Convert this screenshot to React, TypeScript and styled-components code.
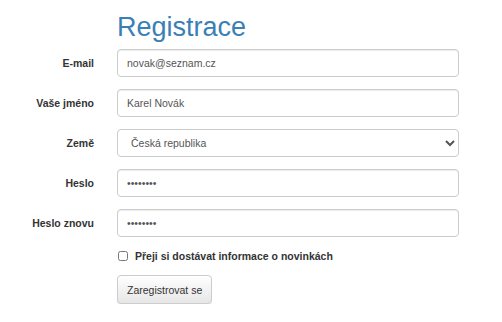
import React, { useState } from "react";
import styled, { createGlobalStyle } from "styled-components";

const GlobalStyle = createGlobalStyle`
  html, body {
    margin: 0;
    padding: 0;
    background: #fff;
  }
  body {
    font-family: "Liberation Sans", Arial, sans-serif;
    font-size: 10.5px;
    color: #333;
  }
`;

const RegistrationPage: React.FC = () => {
  const [email, setEmail] = useState("novak@seznam.cz");
  const [name, setName] = useState("Karel Novák");
  const [country, setCountry] = useState("cz");
  const [password, setPassword] = useState("tajneheslo".slice(0, 8));
  const [password2, setPassword2] = useState("tajneheslo".slice(0, 8));
  const [news, setNews] = useState(false);

  return (
    <>
      <GlobalStyle />
      <Form onSubmit={(e) => e.preventDefault()}>
        <Spacer />
        <Title>Registrace</Title>

        <Label htmlFor="email">E-mail</Label>
        <Input
          id="email"
          type="text"
          value={email}
          onChange={(e) => setEmail(e.target.value)}
        />

        <Label htmlFor="name">Vaše jméno</Label>
        <Input
          id="name"
          type="text"
          value={name}
          onChange={(e) => setName(e.target.value)}
        />

        <Label htmlFor="country">Země</Label>
        <Select
          id="country"
          value={country}
          onChange={(e) => setCountry(e.target.value)}
        >
          <option value="cz">Česká republika</option>
          <option value="sk">Slovenská republika</option>
        </Select>

        <Label htmlFor="pass">Heslo</Label>
        <Input
          id="pass"
          type="password"
          value={password}
          onChange={(e) => setPassword(e.target.value)}
        />

        <Label htmlFor="pass2">Heslo znovu</Label>
        <Input
          id="pass2"
          type="password"
          value={password2}
          onChange={(e) => setPassword2(e.target.value)}
        />

        <Spacer />
        <CheckRow>
          <Checkbox
            type="checkbox"
            checked={news}
            onChange={(e) => setNews(e.target.checked)}
          />
          Přeji si dostávat informace o novinkách
        </CheckRow>

        <Spacer />
        <ButtonCell>
          <Button type="submit">Zaregistrovat se</Button>
        </ButtonCell>
      </Form>
    </>
  );
};

export default RegistrationPage;

const Form = styled.form`
  display: grid;
  grid-template-columns: 94px 342px;
  column-gap: 23px;
  row-gap: 12px;
  align-items: center;
  padding-top: 11px;
`;

const Spacer = styled.div``;

const Title = styled.h1`
  margin: 0 0 -6px 0;
  font-size: 27px;
  font-weight: 400;
  line-height: 32px;
  color: #3a80b6;
`;

const Label = styled.label`
  text-align: right;
  font-weight: 700;
  color: #333;
`;

const Input = styled.input`
  box-sizing: border-box;
  width: 100%;
  height: 28px;
  padding: 4px 9px;
  font-family: "Liberation Sans", Arial, sans-serif;
  font-size: 10.5px;
  color: #555;
  background: #fff;
  border: 1px solid #ccc;
  border-radius: 4px;
  box-shadow: inset 0 1px 1px rgba(0, 0, 0, 0.075);
  outline: none;
`;

const Select = styled.select`
  box-sizing: border-box;
  width: 100%;
  height: 28px;
  padding: 4px 9px;
  font-family: "Liberation Sans", Arial, sans-serif;
  font-size: 10.5px;
  color: #555;
  background: #fff;
  border: 1px solid #ccc;
  border-radius: 4px;
  outline: none;
`;

const CheckRow = styled.label`
  display: flex;
  align-items: center;
  gap: 7px;
  margin-top: -3px;
  font-weight: 700;
  color: #333;
  height: 20px;
`;

const Checkbox = styled.input`
  margin: 0 0 0 1px;
  width: 10px;
  height: 10px;
`;

const ButtonCell = styled.div`
  margin-top: -3px;
`;

const Button = styled.button`
  height: 29px;
  padding: 5px 9px;
  font-family: "Liberation Sans", Arial, sans-serif;
  font-size: 10.5px;
  color: #333;
  background-image: linear-gradient(to bottom, #fff 0, #e6e6e6 100%);
  border: 1px solid #ccc;
  border-radius: 4px;
  box-shadow: inset 0 1px 0 rgba(255, 255, 255, 0.15), 0 1px 1px rgba(0, 0, 0, 0.075);
  cursor: pointer;
`;
